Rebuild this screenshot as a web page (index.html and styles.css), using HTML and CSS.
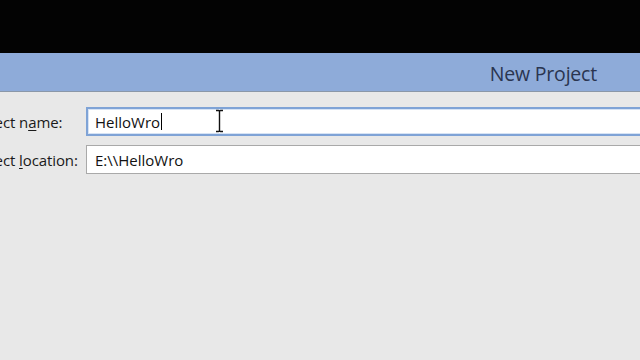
FILE: index.html
```html
<!DOCTYPE html>
<html>
<head>
<meta charset="utf-8">
<link rel="stylesheet" href="styles.css">
</head>
<body>
<div class="screen">
  <div class="topblack"></div>
  <div class="dialog">
    <div class="titlebar"><span class="title">New Project</span></div>
    <div class="form">
      <div class="row row-name">
        <div class="label"><span>Project n<u>a</u>me:</span></div>
        <div class="field focused"><span class="value">HelloWro</span><span class="caret"></span></div>
      </div>
      <div class="row row-loc">
        <div class="label"><span>Project <u>l</u>ocation:</span></div>
        <div class="field"><span class="value">E:\\HelloWro</span></div>
      </div>
    </div>
    <svg class="ibeam" width="9" height="24" viewBox="0 0 9 24">
      <path d="M1 1.5 H3.5 Q4.5 1.5 4.5 2.5 V21.5 Q4.5 22.5 3.5 22.5 H1 M8 1.5 H5.5 Q4.5 1.5 4.5 2.5 M4.5 21.5 Q4.5 22.5 5.5 22.5 H8" fill="none" stroke="#111" stroke-width="1.4"/>
    </svg>
  </div>
</div>
</body>
</html>
```
FILE: styles.css
```css
html, body {
  margin: 0;
  padding: 0;
  width: 640px;
  height: 360px;
  overflow: hidden;
  background: #000;
}
.screen {
  width: 640px;
  height: 360px;
  display: flex;
  flex-direction: column;
}
.topblack {
  height: 53px;
  background: #030303;
  flex: none;
}
.dialog {
  flex: 1;
  background: #e8e8e8;
  position: relative;
  display: flex;
  flex-direction: column;
}
.titlebar {
  height: 38px;
  background: #8eabd9;
  border-bottom: 1px solid #8a97a8;
  display: flex;
  align-items: center;
  justify-content: flex-end;
  padding-right: 43px;
}
.title {
  font-family: "Open Sans", sans-serif;
  font-size: 19.5px;
  color: #2a3550;
  letter-spacing: -0.2px;
  margin-top: 2px;
}
.form {
  display: flex;
  flex-direction: column;
  gap: 9px;
  padding-top: 15px;
}
.row {
  display: flex;
  align-items: center;
  height: 29px;
}
.label {
  width: 113px;
  margin-left: -33px;
  margin-right: 6px;
  flex: none;
  font-family: "Open Sans", sans-serif;
  font-size: 15px;
  letter-spacing: -0.1px;
  color: #1a1a1a;
  white-space: nowrap;
}
.label u {
  text-underline-offset: 2px;
}
.field {
  flex: none;
  width: 620px;
  height: 100%;
  box-sizing: border-box;
  background: #fff;
  border: 1px solid #a9a9a9;
  display: flex;
  align-items: center;
  padding-left: 8px;
  font-family: "Open Sans", sans-serif;
  font-size: 15px;
  color: #111;
}
.field.focused {
  border: 2px solid #7fa3d6;
  box-shadow: inset 0 0 0 1px #d6e3f5;
  padding-left: 7px;
}
.caret {
  width: 1px;
  height: 17px;
  background: #000;
  margin-left: 1px;
}
.ibeam {
  position: absolute;
  left: 215px;
  top: 56px;
}
```
